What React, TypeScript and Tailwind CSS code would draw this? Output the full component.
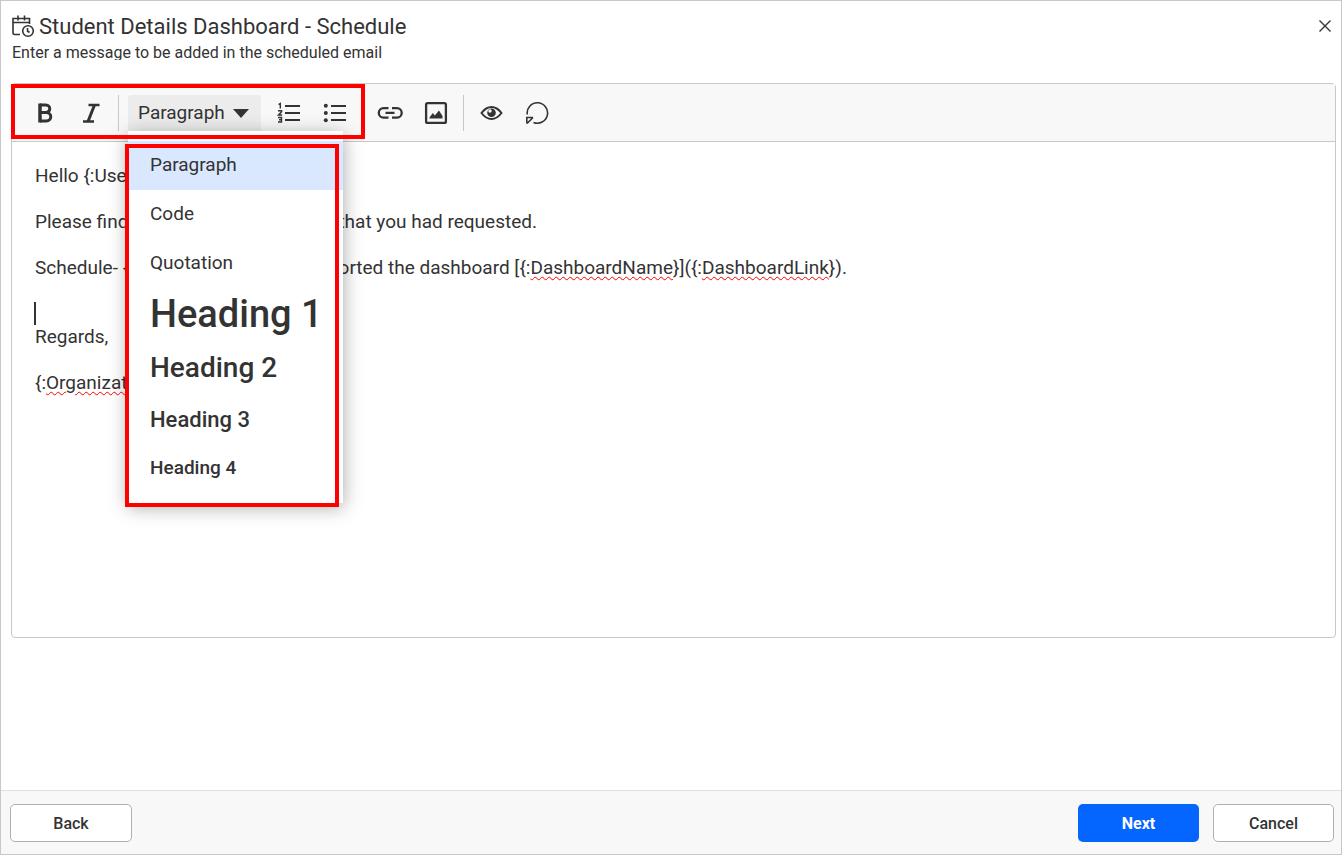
import type { ReactNode } from "react";

function ScheduleIcon() {
  return (
    <svg width="23" height="23" viewBox="0 0 23 23" fill="none" stroke="#333" strokeWidth="1.6" aria-hidden="true">
      <path d="M8 19.5H2.500a1.500 1.500 0 0 1-1.500-1.500V3.500h16.500V9M1 7.500h16.500" />
      <path d="M6 .500v5M12.500 .500v5" />
      <circle cx="16" cy="16" r="5.300" />
      <path d="M15.500 13v3l2 1.500" />
    </svg>
  );
}

function BoldIcon() {
  return (
    <svg width="24" height="24" viewBox="0 0 24 24" fill="none" stroke="#333" strokeWidth="3" aria-hidden="true">
      <path d="M7 4h6a3.500 3.500 0 0 1 0 7.500H7M7 11.500h6.500a4 4 0 0 1 0 8.500H7" />
      <path d="M7 2.500v19" strokeWidth="3.500" />
    </svg>
  );
}

function ItalicIcon() {
  return (
    <svg width="24" height="24" viewBox="0 0 24 24" fill="none" stroke="#333" aria-hidden="true">
      <path d="M9.500 4H20.500M4 20.500H15" strokeWidth="2.400" />
      <path d="M15.500 4L9 20.500" strokeWidth="3" />
    </svg>
  );
}

function OrderedListIcon() {
  return (
    <svg width="24" height="24" viewBox="0 0 24 24" fill="none" stroke="#333" aria-hidden="true">
      <path d="M8 5h15M8 12h15M8 19h15" strokeWidth="2.200" />
      <path d="M1.500 3.500l1.800-1v5M1 9.700h3.600v1L1.500 14h3.600M1 16.500h3.500v4.500H1M2 18.800h2.500" strokeWidth="1.400" />
    </svg>
  );
}

function BulletListIcon() {
  return (
    <svg width="24" height="24" viewBox="0 0 24 24" stroke="#333" aria-hidden="true">
      <path d="M8 5h15M8 12h15M8 19h15" strokeWidth="2.200" />
      <g fill="#333" stroke="none">
        <circle cx="2.800" cy="4.700" r="2" />
        <circle cx="2.800" cy="12" r="2" />
        <circle cx="2.800" cy="19.300" r="2" />
      </g>
    </svg>
  );
}

function LinkIcon() {
  return (
    <svg width="26" height="24" viewBox="0 0 26 24" fill="none" stroke="#333" strokeWidth="2.300" aria-hidden="true">
      <path d="M11.500 7.200H6.500a4.700 4.700 0 0 0 0 9.400h5M15 7.200h5a4.700 4.700 0 0 1 0 9.400h-5M8.500 11.900h9" />
    </svg>
  );
}

function ImageIcon() {
  return (
    <svg width="24" height="24" viewBox="0 0 24 24" fill="none" aria-hidden="true">
      <rect x="2.100" y="2.100" width="19.800" height="19.800" rx="1.500" stroke="#333" strokeWidth="2.300" />
      <path d="M5.500 17.500v-1l3.300-4.500 2 2.500 4.200-5 3.500 5.500v2.500z" fill="#333" />
    </svg>
  );
}

function EyeIcon() {
  return (
    <svg width="24" height="24" viewBox="0 0 24 24" fill="none" aria-hidden="true">
      <path d="M2.500 12Q7 6 12.500 6T22.500 12Q18 18 12.500 18T2.500 12Z" stroke="#333" strokeWidth="2" />
      <circle cx="12.500" cy="11.800" r="4.300" fill="#333" />
      <circle cx="11" cy="10" r="1.700" fill="#f8f8f8" />
    </svg>
  );
}

function RefreshIcon() {
  return (
    <svg width="24" height="24" viewBox="0 0 24 24" fill="none" stroke="#333" strokeWidth="1.600" aria-hidden="true">
      <path d="M2.300 13.500A10.200 10.200 0 1 1 8.500 21.400" />
      <path d="M1.800 22.500v-6h6.200M2 22.500L8 16.500" />
    </svg>
  );
}

function ToolButton({ label, children }: { label: string; children: ReactNode }) {
  return (
    <button type="button" aria-label={label} className="flex h-9 w-[46px] items-center justify-center">
      {children}
    </button>
  );
}

function Separator() {
  return <span className="mx-1 h-9 w-px bg-[#c8c8c8]" />;
}

function Misspelled({ children }: { children: ReactNode }) {
  return (
    <span className="underline decoration-[#ff0000] decoration-wavy decoration-1 underline-offset-2">{children}</span>
  );
}

const formats = [
  { label: "Paragraph", style: "h-[49px] pb-[2px] bg-[#d9e8ff] text-[19px]" },
  { label: "Code", style: "h-[49px] pb-[2px] text-[19px]" },
  { label: "Quotation", style: "h-[49px] pb-[2px] text-[19px]" },
  { label: "Heading 1", style: "h-[53px] text-[38px] font-medium" },
  { label: "Heading 2", style: "h-[54px] text-[28px] font-medium" },
  { label: "Heading 3", style: "h-[50px] text-[22px] font-medium" },
  { label: "Heading 4", style: "h-[48px] pb-[2px] text-[19px] font-medium" },
];

function FormatPicker() {
  return (
    <div className="relative mx-[5px]">
      <button
        type="button"
        aria-haspopup="menu"
        aria-expanded="true"
        className="flex h-9 w-[133px] items-center gap-2 rounded-t-sm bg-[#ececec] pt-px pl-[10px] text-[19px]"
      >
        Paragraph
        <svg width="16" height="9" viewBox="0 0 16 9" fill="#333" aria-hidden="true">
          <path d="M0 0h16L8 9z" />
        </svg>
      </button>
      <div
        role="menu"
        className="absolute top-full left-0 z-10 w-[215px] bg-white py-[10px] shadow-[0_4px_18px_rgba(0,0,0,0.35)]"
      >
        {formats.map((f) => (
          <button
            key={f.label}
            type="button"
            role="menuitem"
            className={"flex w-full items-center pl-[22px] leading-none whitespace-nowrap " + f.style}
          >
            {f.label}
          </button>
        ))}
        <div className="pointer-events-none absolute top-[13px] -bottom-1 -left-[3px] w-[214px] border-4 border-[#ff0000]" />
      </div>
    </div>
  );
}

export default function App() {
  return (
    <div className="flex min-h-screen flex-col border border-[#c8c8c8] bg-white font-['Roboto',sans-serif] text-[#333]">
      <header className="flex items-start justify-between pt-3 pr-2 pl-[11px]">
        <div>
          <h1 className="flex items-center gap-1 text-[22px] leading-[27px]">
            <ScheduleIcon />
            Student Details Dashboard - Schedule
          </h1>
          <p className="h-5 overflow-hidden text-[16px] leading-[25px]">
            Enter a message to be added in the scheduled email
          </p>
        </div>
        <button type="button" aria-label="Close" className="flex h-[26px] w-4 items-center justify-center">
          <svg width="14" height="14" viewBox="0 0 14 14" stroke="#333" strokeWidth="1.400" aria-hidden="true">
            <path d="M1.500 1.500l11 11M12.500 1.500l-11 11" />
          </svg>
        </button>
      </header>

      <main className="flex-1 pt-[23px] pr-[5px] pb-6 pl-[10px]">
        <div className="rounded-sm border border-[#c8c8c8]">
          <div role="toolbar" className="relative flex h-[58px] items-center border-b border-[#c8c8c8] bg-[#f8f8f8] pl-[10px]">
            <ToolButton label="Bold"><BoldIcon /></ToolButton>
            <ToolButton label="Italic"><ItalicIcon /></ToolButton>
            <Separator />
            <FormatPicker />
            <ToolButton label="Numbered list"><OrderedListIcon /></ToolButton>
            <ToolButton label="Bulleted list"><BulletListIcon /></ToolButton>
            <span className="w-[9px]" />
            <ToolButton label="Insert link"><LinkIcon /></ToolButton>
            <ToolButton label="Insert image"><ImageIcon /></ToolButton>
            <Separator />
            <ToolButton label="Preview"><EyeIcon /></ToolButton>
            <ToolButton label="Reset"><RefreshIcon /></ToolButton>
            <div className="pointer-events-none absolute top-0 -left-px z-20 h-[55px] w-[354px] border-4 border-[#ff0000]" />
          </div>
          <div
            role="textbox"
            aria-multiline="true"
            aria-label="Message"
            className="min-h-[495px] space-y-[23px] px-[23px] pt-[22px] text-[19px] leading-[23px]"
          >
            <p>Hello {"{:Username}"},</p>
            <p>Please find attached the dashboard that you had requested.</p>
            <p>
              Schedule- {"{:ScheduleName}"} has exported the dashboard [{"{:"}
              <Misspelled>DashboardName</Misspelled>
              {"}]({:"}
              <Misspelled>DashboardLink</Misspelled>
              {"})."}
            </p>
            <p>
              <span className="-ml-px block h-[23px] w-[2px] bg-[#333]" />
              Regards,
            </p>
            <p>
              {"{:"}
              <Misspelled>OrganizationName</Misspelled>
              {"}"}
            </p>
          </div>
        </div>
      </main>

      <footer className="flex items-center gap-[14px] border-t border-[#e0e0e0] bg-[#f8f8f8] pt-[13px] pr-[7px] pb-3 pl-[9px] text-[16px] font-medium">
        <button type="button" className="mr-auto h-[38px] w-[122px] rounded-[5px] border border-[#b0b0b0] bg-white pt-[2px]">
          Back
        </button>
        <button type="button" className="h-[38px] w-[121px] rounded-[5px] bg-[#0565ff] pt-[2px] font-bold text-white">
          Next
        </button>
        <button type="button" className="h-[38px] w-[121px] rounded-[5px] border border-[#b0b0b0] bg-white pt-[2px]">
          Cancel
        </button>
      </footer>
    </div>
  );
}
